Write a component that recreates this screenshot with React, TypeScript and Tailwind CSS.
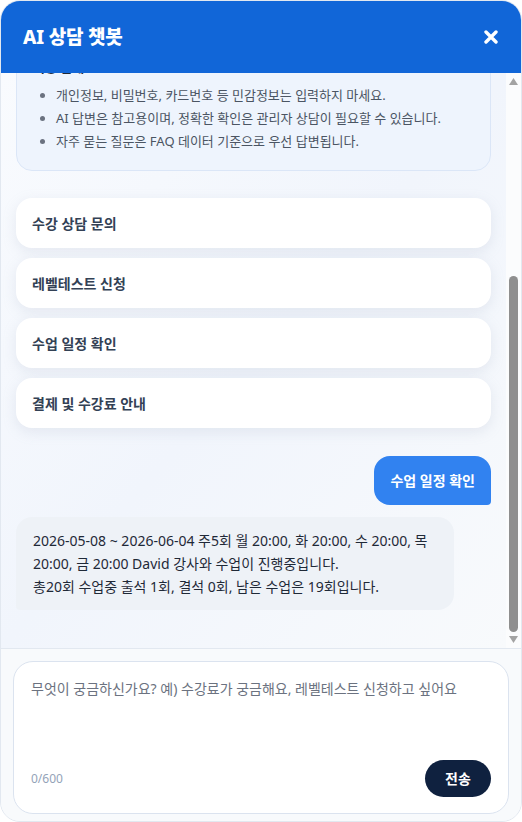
import React, { useLayoutEffect, useRef } from "react";

const quickMenus = ["수강 상담 문의", "레벨테스트 신청", "수업 일정 확인", "결제 및 수강료 안내"];

const notices = [
  "개인정보, 비밀번호, 카드번호 등 민감정보는 입력하지 마세요.",
  "AI 답변은 참고용이며, 정확한 확인은 관리자 상담이 필요할 수 있습니다.",
  "자주 묻는 질문은 FAQ 데이터 기준으로 우선 답변됩니다.",
];

const App = () => {
  const listRef = useRef<HTMLDivElement>(null);

  useLayoutEffect(() => {
    if (listRef.current) {
      listRef.current.scrollTop = listRef.current.scrollHeight;
    }
  }, []);

  return (
    <div
      className="w-[522px] h-[822px] bg-white"
      style={{ fontFamily: '"Noto Sans", "Noto Sans CJK KR", sans-serif' }}
    >
      <div className="h-full flex flex-col rounded-[20px] overflow-hidden border border-[#e2e8f0] bg-[#f8fafc]">
        <div className="h-[72px] shrink-0 bg-[#1166d8] flex items-center justify-between pl-[22px] pr-[23px]">
          <h1 className="text-white text-[19px] font-extrabold tracking-[-0.2px]">AI 상담 챗봇</h1>
          <button className="text-white">
            <svg width="14" height="14" viewBox="0 0 14 14">
              <path d="M2 2 L12 12 M12 2 L2 12" stroke="white" strokeWidth="3.4" strokeLinecap="round" />
            </svg>
          </button>
        </div>

        <div className="flex-1 min-h-0 flex">
          <div
            ref={listRef}
            className="flex-1 overflow-y-scroll [scrollbar-width:none] bg-gradient-to-br from-[#f9fbfe] via-[#f1f5fc] to-[#f8fafc]"
          >
            <div className="flex flex-col px-[15px] pt-4 pb-[38px]">
              <div className="self-center text-[12px] text-[#94a3b8] mb-4">오늘</div>
              <div className="max-w-[438px] self-start bg-[#eef2f7] rounded-2xl rounded-bl-[4px] px-[17px] py-3 text-[14px] leading-[23px] text-[#1f2937]">
                안녕하세요! AI 상담 챗봇입니다.
                <br />
                수강 상담, 레벨테스트, 수업 일정, 결제 관련 문의를 도와드립니다.
                <br />
                아래 메뉴를 선택하거나 질문을 입력해 주세요.
              </div>

              <div className="mt-[56px] bg-[#eef4fd] border border-[#dbe6f7] rounded-2xl px-4 pt-[14px] pb-[17px]">
                <p className="text-[13px] font-bold text-[#1f2937] leading-[22px] mb-[6px]">이용 안내</p>
                <ul className="list-disc pl-[23px] marker:text-[#6b7280]">
                  {notices.map((n) => (
                    <li key={n} className="text-[13px] leading-[23px] text-[#4b5563]">
                      {n}
                    </li>
                  ))}
                </ul>
              </div>

              <div className="mt-[27px] flex flex-col gap-[10px]">
                {quickMenus.map((m) => (
                  <button
                    key={m}
                    className="h-[50px] bg-white rounded-2xl text-left px-4 text-[14px] font-bold text-[#334155] shadow-[0_4px_14px_rgba(148,163,184,0.18)]"
                  >
                    {m}
                  </button>
                ))}
              </div>

              <div className="mt-[28px] self-end bg-[#3182f0] text-white text-[14px] font-semibold rounded-2xl rounded-br-[4px] h-[49px] px-4 flex items-center">
                수업 일정 확인
              </div>

              <div className="mt-[12px] self-start max-w-[438px] bg-[#eef2f7] rounded-2xl rounded-bl-[4px] px-[17px] pt-[12px] pb-[12px] text-[14px] leading-[23px] text-[#1f2937]">
                2026-05-08 ~ 2026-06-04 주5회 월 20:00, 화 20:00, 수 20:00, 목 20:00, 금 20:00 David 강사와 수업이 진행중입니다.
                <br />
                총20회 수업중 출석 1회, 결석 0회, 남은 수업은 19회입니다.
              </div>
            </div>
          </div>

          {/* scrollbar */}
          <div className="w-[15px] shrink-0 flex flex-col items-center bg-[#fbfcfd]">
            <div className="h-[15px] flex items-center justify-center pt-[2px]">
              <svg width="9" height="7" viewBox="0 0 9 7">
                <path d="M4.5 0 L9 7 L0 7 Z" fill="#a3a3a3" />
              </svg>
            </div>
            <div className="flex-1 flex flex-col justify-end pb-[1px]">
              <div className="w-[9px] h-[356px] rounded-full bg-[#8f8f8f]" />
            </div>
            <div className="h-[15px] flex items-center justify-center pb-[2px]">
              <svg width="9" height="7" viewBox="0 0 9 7">
                <path d="M0 0 L9 0 L4.5 7 Z" fill="#a3a3a3" />
              </svg>
            </div>
          </div>
        </div>

        <div className="shrink-0 border-t border-[#e2e8f0] bg-[#f8fafc] px-[12px] pt-[12px] pb-[7px]">
          <div className="h-[153px] bg-white border border-[#dbe3ef] rounded-[20px] flex flex-col px-[17px] pt-[16px] pb-[16px]">
            <textarea
              className="flex-1 resize-none outline-none text-[14px] leading-[22px] text-[#1f2937] placeholder:text-[#6b7280] bg-transparent"
              placeholder="무엇이 궁금하신가요? 예) 수강료가 궁금해요, 레벨테스트 신청하고 싶어요"
            />
            <div className="flex items-center justify-between">
              <span className="text-[12px] text-[#94a3b8]">0/600</span>
              <button className="h-[37px] w-[66px] rounded-full bg-[#0f213f] text-white text-[14px] font-bold">
                전송
              </button>
            </div>
          </div>
        </div>
      </div>
    </div>
  );
};

export default App;
